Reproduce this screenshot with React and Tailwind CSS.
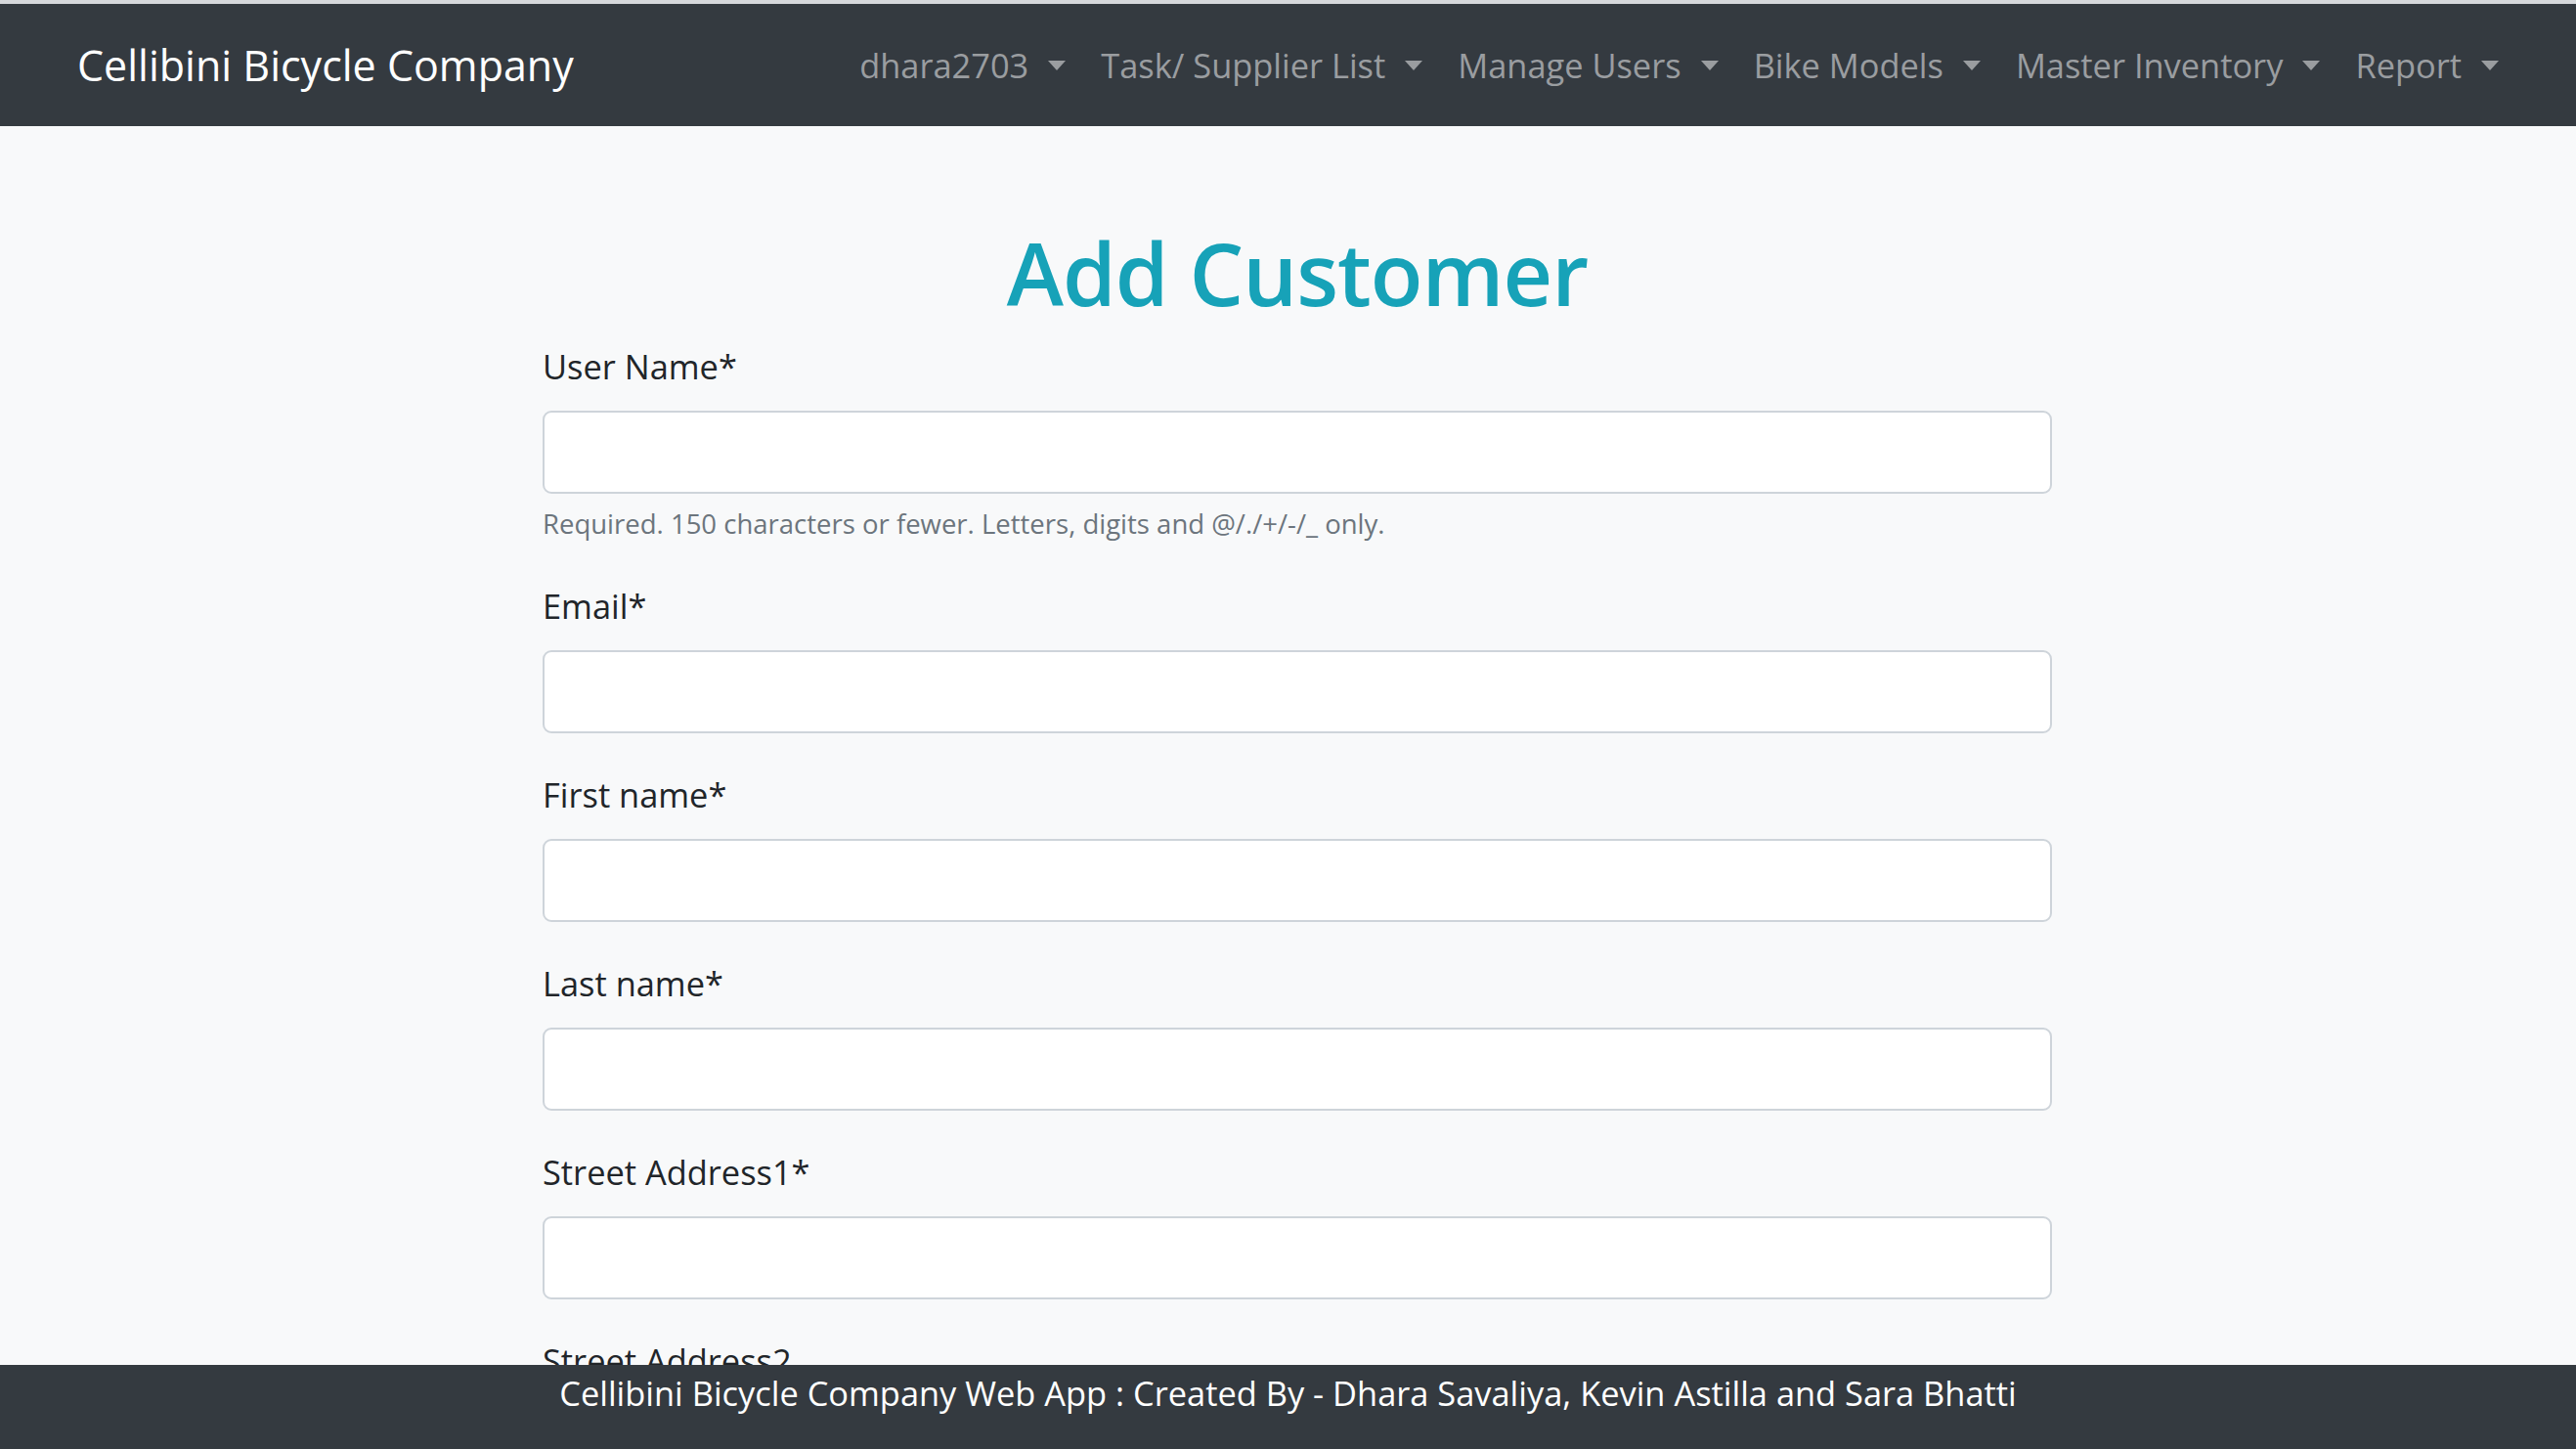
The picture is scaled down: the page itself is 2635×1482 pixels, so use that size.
const navItems = ['dhara2703', 'Task/ Supplier List', 'Manage Users', 'Bike Models', 'Master Inventory', 'Report'];

const fields = [
  { label: 'User Name*', help: 'Required. 150 characters or fewer. Letters, digits and @/./+/-/_ only.' },
  { label: 'Email*' },
  { label: 'First name*' },
  { label: 'Last name*' },
  { label: 'Street Address1*' },
  { label: 'Street Address2' },
  { label: 'City*' },
];

function Caret() {
  return (
    <span className="ml-[20px] inline-block h-0 w-0 border-x-[9px] border-t-[10px] border-x-transparent border-t-[#9a9da0]" />
  );
}

export default function App() {
  return (
    <div
      className="relative h-[1482px] overflow-hidden bg-[#f8f9fa] text-[#212529]"
      style={{ fontFamily: '"Segoe UI", "Open Sans", "Noto Sans", sans-serif' }}
    >
      <div className="h-[4px] bg-[#d6d8db]" />

      {/* navbar */}
      <nav className="flex h-[125px] items-center justify-between bg-[#343a40] px-[79px]">
        <div className="text-[43px] leading-[68px] text-white">Cellibini Bicycle Company</div>
        <ul className="flex items-center">
          {navItems.map((item, i) => (
            <li
              key={item}
              className={`flex items-center px-[18px] text-[34.4px] leading-[54px] text-[#9a9da0] ${i === navItems.length - 1 ? 'pr-0' : ''}`}
            >
              <span>{item}</span>
              <Caret />
            </li>
          ))}
        </ul>
      </nav>

      {/* form */}
      <main className="ml-[555px] w-[1544px] pt-[96px]">
        <h1 className="mb-[15px] text-center text-[88px] font-semibold leading-[108px] tracking-[-1px] text-[#17a2b8]">Add Customer</h1>
        <form>
          {fields.map((f) => (
            <div key={f.label} className="mb-[36px]">
              <label className="mb-[18px] block text-[34.4px] leading-[54px]">{f.label}</label>
              <input
                type="text"
                className="block h-[85px] w-full rounded-[9px] border-2 border-[#ced4da] bg-white px-[27px] text-[34px]"
              />
              {f.help && (
                <small className="mt-[9px] block text-[27.5px] leading-[43px] text-[#6c757d]">{f.help}</small>
              )}
            </div>
          ))}
        </form>
      </main>

      {/* footer */}
      <footer className="fixed bottom-0 left-0 right-0 h-[86px] bg-[#343a40] pt-[2px] text-center text-[34.4px] leading-[54px] text-white">
        Cellibini Bicycle Company Web App : Created By - Dhara Savaliya, Kevin Astilla and Sara Bhatti
      </footer>
    </div>
  );
}
